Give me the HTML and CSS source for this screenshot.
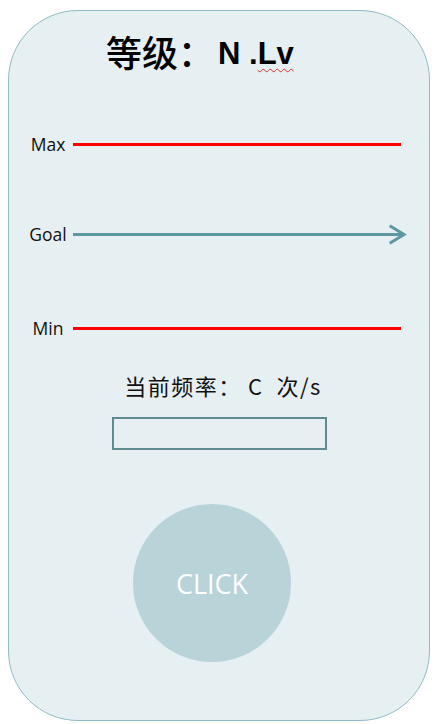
FILE: index.html
```html
<!DOCTYPE html>
<html lang="zh">
<head>
<meta charset="utf-8">
<title>等级</title>
<link rel="stylesheet" href="styles.css">
</head>
<body>
<div class="card">
  <h1 class="title">等级：<span class="latin">N .<span class="squiggle">Lv</span></span></h1>

  <div class="row row-max">
    <span class="label">Max</span>
    <span class="bar red"></span>
  </div>

  <div class="row row-goal">
    <span class="label">Goal</span>
    <svg class="arrow" width="334" height="25" viewBox="0 0 334 25">
      <line x1="0" y1="12.5" x2="331" y2="12.5" stroke="#5b98a1" stroke-width="3"/>
      <polyline points="318,4.5 331,12.5 318,20.5" fill="none" stroke="#5b98a1" stroke-width="3" stroke-linecap="square"/>
    </svg>
  </div>

  <div class="row row-min">
    <span class="label">Min</span>
    <span class="bar red"></span>
  </div>

  <p class="freq">当前频率：&nbsp;C&nbsp; 次/s</p>

  <div class="input-box"></div>

  <div class="click">CLICK</div>
</div>
</body>
</html>
```

FILE: styles.css
```css
html, body {
  margin: 0;
  padding: 0;
  background: #ffffff;
}

body {
  font-family: "Open Sans", "Noto Sans CJK SC", sans-serif;
  color: #111;
}

.card {
  box-sizing: border-box;
  width: 422px;
  height: 711px;
  margin: 10px 0 0 8px;
  border: 1px solid #8fbcc4;
  border-radius: 70px;
  background: #e6eff2;
  display: flex;
  flex-direction: column;
}

.title {
  margin: 18px 0 0 0;
  height: 44px;
  padding-left: 97px;
  font-size: 36px;
  line-height: 44px;
  font-weight: 500;
  font-family: "Noto Sans CJK SC", sans-serif;
  color: #000;
  white-space: nowrap;
}

.latin {
  font-family: "Liberation Sans", Arial, sans-serif;
  font-weight: bold;
  font-size: 31px;
  line-height: 1;
  margin-left: 4px;
  vertical-align: 3px;
}

.squiggle {
  text-decoration: underline wavy #e03030 1px;
  text-underline-offset: 4px;
}

.row {
  display: flex;
  align-items: center;
  height: 21px;
  padding-left: 14px;
}

.row-max { margin-top: 61px; }
.row-goal { margin-top: 69px; }
.row-min { margin-top: 73px; }

.label {
  width: 50px;
  text-align: center;
  font-size: 17.5px;
  line-height: 21px;
  color: #111;
}

.bar {
  display: block;
  width: 328px;
  height: 3px;
}

.red { background: #ff0000; }

.arrow { display: block; }

.freq {
  margin: 31px 0 0 0;
  align-self: center;
  padding-left: 8px;
  font-size: 22px;
  letter-spacing: 1.5px;
  line-height: 30px;
  font-family: "Noto Sans CJK SC", sans-serif;
  color: #111;
}

.input-box {
  box-sizing: border-box;
  margin: 17px 0 0 103px;
  width: 215px;
  height: 33px;
  border: 2px solid #5f8a90;
}

.click {
  margin: 54px 0 0 124px;
  width: 158px;
  height: 158px;
  border-radius: 50%;
  background: #b8d4d9;
  color: #ffffff;
  font-size: 27px;
  display: flex;
  align-items: center;
  justify-content: center;
}
```
